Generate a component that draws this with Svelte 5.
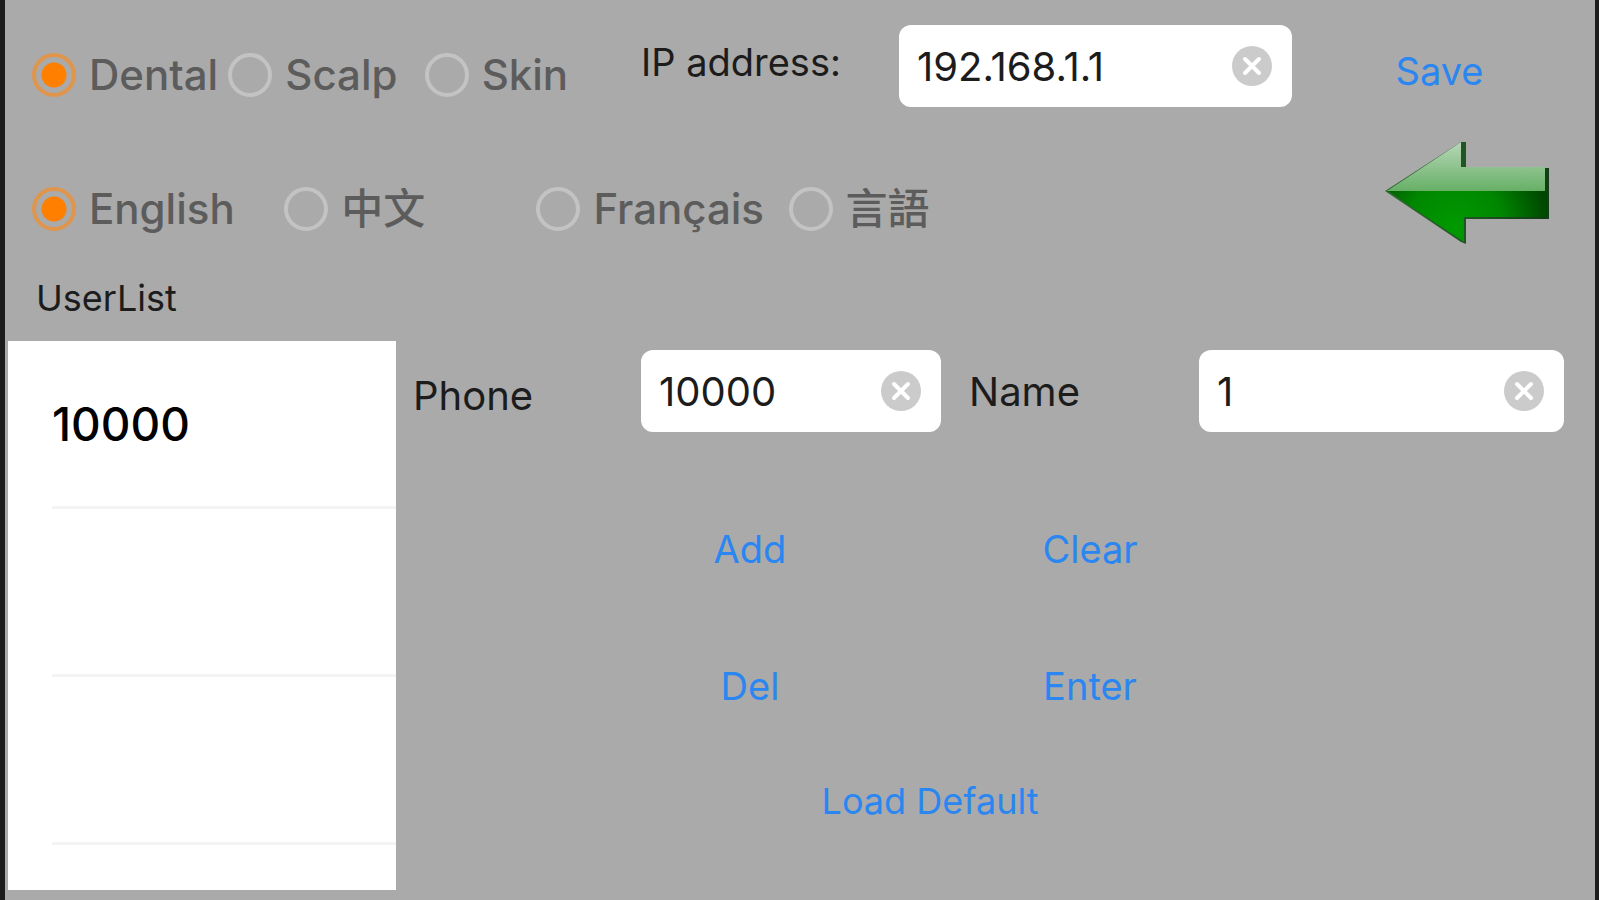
<script>
  // Device types and languages offered at the top
  const devices = ['Dental', 'Scalp', 'Skin'];
  const languages = ['English', '中文', 'Français', '言語'];

  let device = 'Dental';
  let language = 'English';

  const defaultIp = '192.168.1.1';
  let ip = defaultIp;

  let users = [{ phone: '10000', name: '1' }];
  let phone = '10000';
  let name = '1';

  function selectUser(user) {
    phone = user.phone;
    name = user.name;
  }

  function addUser() {
    if (!phone || users.some((u) => u.phone === phone)) return;
    users = [...users, { phone, name }];
  }

  function deleteUser() {
    users = users.filter((u) => u.phone !== phone);
  }

  function clearForm() {
    phone = '';
    name = '';
  }

  function enter() {
    const user = users.find((u) => u.phone === phone);
    if (user) selectUser(user);
  }

  function save() {
    ip = ip.trim();
  }

  function loadDefault() {
    ip = defaultIp;
    device = 'Dental';
    language = 'English';
  }
</script>

{#snippet clearIcon()}
  <svg viewBox="0 0 40 40" aria-hidden="true">
    <circle cx="20" cy="20" r="20" fill="#cbcbcb" />
    <path d="M13 13L27 27M27 13L13 27" stroke="#fff" stroke-width="4" stroke-linecap="round" />
  </svg>
{/snippet}

<main>
  <header class="top-row">
    <div class="radios devices" role="radiogroup" aria-label="Device">
      {#each devices as item}
        <label>
          <input type="radio" name="device" value={item} bind:group={device} />
          {item}
        </label>
      {/each}
    </div>
    <label class="caption" for="ip">IP address:</label>
    <div class="field">
      <input type="text" id="ip" bind:value={ip} />
      <button type="button" aria-label="Clear IP address" on:click={() => (ip = '')}>
        {@render clearIcon()}
      </button>
    </div>
    <button type="button" class="link save" on:click={save}>Save</button>
  </header>

  <div class="language-row">
    <div class="radios languages" role="radiogroup" aria-label="Language">
      {#each languages as item}
        <label>
          <input type="radio" name="language" value={item} bind:group={language} />
          {item}
        </label>
      {/each}
    </div>
    <button type="button" class="back" aria-label="Back">
      <svg viewBox="0 0 166 104" aria-hidden="true">
        <defs>
          <linearGradient id="shine" x1="0" y1="0" x2="0" y2="1">
            <stop offset="0" stop-color="#b9d6b9" />
            <stop offset="1" stop-color="#66b066" />
          </linearGradient>
          <linearGradient id="edge" x1="0" y1="0" x2="1" y2="0">
            <stop offset="0" stop-color="#2f6b33" />
            <stop offset="1" stop-color="#123d16" />
          </linearGradient>
          <radialGradient id="body" gradientUnits="userSpaceOnUse" cx="70" cy="86" r="96">
            <stop offset="0" stop-color="#009a00" />
            <stop offset="0.5" stop-color="#008700" />
            <stop offset="1" stop-color="#004300" />
          </radialGradient>
        </defs>
        <path d="M0 50L76 1H81V27H164V78H81V103L76 101Z" fill="url(#edge)" />
        <path d="M2 50L76 1V26H160V50Z" fill="url(#shine)" />
        <path d="M3 50H162V76H79V101Z" fill="url(#body)" />
      </svg>
    </button>
  </div>

  <h2>UserList</h2>

  <div class="content">
    <ul class="user-list">
      {#each users as user}
        <li><button type="button" on:click={() => selectUser(user)}>{user.phone}</button></li>
      {/each}
      {#each Array(Math.max(0, 3 - users.length)) as _}
        <li></li>
      {/each}
    </ul>

    <div class="editor">
      <div class="form">
        <label class="caption large phone" for="phone">Phone</label>
        <div class="field">
          <input type="text" id="phone" bind:value={phone} />
          <button type="button" aria-label="Clear phone" on:click={() => (phone = '')}>
            {@render clearIcon()}
          </button>
        </div>
        <label class="caption large name" for="name">Name</label>
        <div class="field">
          <input type="text" id="name" bind:value={name} />
          <button type="button" aria-label="Clear name" on:click={() => (name = '')}>
            {@render clearIcon()}
          </button>
        </div>
      </div>

      <div class="actions">
        <button type="button" class="link" on:click={addUser}>Add</button>
        <button type="button" class="link" on:click={clearForm}>Clear</button>
        <button type="button" class="link" on:click={deleteUser}>Del</button>
        <button type="button" class="link" on:click={enter}>Enter</button>
        <button type="button" class="link wide" on:click={loadDefault}>Load Default</button>
      </div>
    </div>
  </div>
</main>

<style>
  :global(body) {
    margin: 0;
    background: #aaa;
  }

  main {
    box-sizing: border-box;
    min-height: 100vh;
    padding-bottom: 10px;
    border: solid #1c1c1c;
    border-width: 0 4px 0 5px;
    background: #aaa;
    color: #1c1c1c;
    font-family: Inter, "Noto Sans CJK SC", sans-serif;
    font-size: 38px;
  }

  button,
  input {
    font: inherit;
    margin: 0;
    padding: 0;
  }

  button {
    border: none;
    background: none;
    cursor: pointer;
  }

  svg {
    display: block;
    width: 100%;
  }

  .top-row {
    display: grid;
    grid-template-columns: minmax(0, 636fr) minmax(0, 258fr) minmax(0, 393fr) minmax(0, 303fr);
    align-items: start;
    min-height: 116px;
    padding-top: 25px;
  }

  .radios {
    display: grid;
    box-sizing: border-box;
    padding-left: 27px;
    color: #5c5c5c;
    font-size: 42px;
    font-weight: 500;
    line-height: 46px;
  }

  .radios label {
    display: flex;
    align-items: center;
    gap: 13px;
    white-space: nowrap;
  }

  .radios input {
    appearance: none;
    flex: none;
    box-sizing: border-box;
    width: 44px;
    height: 44px;
    border: 4px solid #c3c3c3;
    border-radius: 50%;
  }

  .radios input:checked {
    border-color: #e0954c;
    background: radial-gradient(circle, #ff7f00 12px, transparent 13px);
  }

  .devices {
    grid-template-columns: repeat(3, 1fr);
    padding-top: 27px;
    padding-right: 20px;
  }

  .languages {
    grid-template-columns: repeat(4, 1fr);
    width: 67%;
    padding-bottom: 13px;
  }

  .caption {
    line-height: 74px;
    white-space: nowrap;
  }

  .large {
    font-size: 40px;
  }

  .field {
    display: flex;
    align-items: center;
    box-sizing: border-box;
    height: 82px;
    padding: 0 20px 0 18px;
    border-radius: 12px;
    background: #fff;
  }

  .field input {
    flex: 1;
    min-width: 0;
    border: none;
    outline: none;
    background: none;
    color: #1c1c1c;
    font-size: 40px;
  }

  .field button {
    flex: none;
    width: 40px;
    height: 40px;
  }

  .link {
    color: #2a86f0;
  }

  .save {
    height: 92px;
    padding-right: 8px;
  }

  .language-row {
    display: flex;
    align-items: flex-end;
    justify-content: space-between;
    padding-right: 44px;
  }

  .back {
    width: 166px;
  }

  h2 {
    margin: 0;
    padding: 10px 0 0 31px;
    font-size: 36px;
    font-weight: 400;
    line-height: 86px;
  }

  .content {
    display: grid;
    grid-template-columns: minmax(0, 388fr) minmax(0, 1199fr);
    padding-left: 3px;
  }

  .user-list {
    min-height: 504px;
    margin: 0;
    padding: 0 0 45px 44px;
    background: #fff;
    list-style: none;
  }

  .user-list li {
    box-sizing: border-box;
    height: 168px;
    border-bottom: 3px solid #f4f4f4;
  }

  .user-list button {
    width: 100%;
    height: 100%;
    color: #000;
    font-size: 46px;
    font-weight: 500;
    text-align: left;
  }

  .editor {
    padding-top: 9px;
  }

  .form {
    display: grid;
    grid-template-columns: minmax(0, 245fr) minmax(0, 300fr) minmax(0, 258fr) minmax(0, 365fr);
    align-items: start;
    padding-right: 31px;
  }

  .phone {
    padding-left: 17px;
    line-height: 92px;
  }

  .name {
    padding-left: 28px;
    line-height: 84px;
  }

  .actions {
    display: grid;
    grid-template-columns: 1fr 1fr;
    grid-template-rows: 137px 137px 93px;
    width: 680px;
    max-width: 100%;
    margin: 38px auto 0 184px;
  }

  .wide {
    grid-column: 1 / 3;
    padding-left: 20px;
    font-size: 36px;
  }
</style>
